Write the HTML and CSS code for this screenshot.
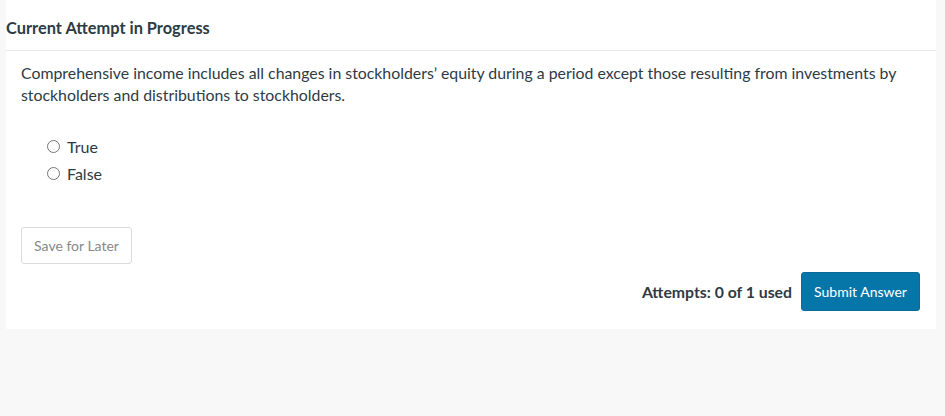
FILE: index.html
```html
<!DOCTYPE html>
<html>
<head>
<meta charset="utf-8">
<link rel="stylesheet" href="styles.css">
</head>
<body>
<div class="panel">
  <div class="header"><h2 class="title">Current Attempt in Progress</h2></div>
  <div class="content">
    <p class="question">Comprehensive income includes all changes in stockholders’ equity during a period except those resulting from investments by stockholders and distributions to stockholders.</p>
    <div class="options">
      <label class="option"><span class="radio"></span><span>True</span></label>
      <label class="option"><span class="radio"></span><span>False</span></label>
    </div>
    <button class="btn-save">Save for Later</button>
    <div class="footer">
      <span class="attempts">Attempts: 0 of 1 used</span>
      <button class="btn-submit">Submit Answer</button>
    </div>
  </div>
</div>
</body>
</html>
```

FILE: styles.css
```css
html, body {
  margin: 0;
  padding: 0;
  background: #f8f8f8;
  font-family: Lato, "Open Sans", sans-serif;
  color: #2d3b45;
}
.panel {
  margin-left: 6px;
  width: 930px;
  background: #fff;
  padding-bottom: 18px;
}
.header {
  padding: 17px 0 11px;
  border-bottom: 1px solid #e8e8e8;
}
.title {
  margin: 0;
  font-size: 16.4px;
  font-weight: 700;
  line-height: 22px;
}
.content {
  padding: 0 16px 0 15px;
}
.question {
  margin: 11px 0 0;
  font-size: 15.85px;
  line-height: 22px;
}
.options {
  display: flex;
  flex-direction: column;
  margin-top: 27px;
  padding-left: 26px;
}
.option {
  display: flex;
  align-items: center;
  gap: 7px;
  height: 27px;
  font-size: 16px;
}
.radio {
  width: 11px;
  height: 11px;
  border: 1px solid #767676;
  border-radius: 50%;
  background: #fff;
}
.btn-save {
  display: block;
  margin-top: 40px;
  width: 111px;
  height: 37px;
  border: 1px solid #dcdcdc;
  border-radius: 3px;
  background: #fff;
  color: #888;
  font-family: Lato, sans-serif;
  font-size: 14px;
  padding: 0;
}
.footer {
  display: flex;
  justify-content: flex-end;
  align-items: center;
  gap: 9px;
  margin-top: 8px;
}
.attempts {
  font-size: 15.8px;
  font-weight: 700;
  color: #2d3b45;
  margin-top: -1px;
}
.btn-submit {
  width: 119px;
  height: 39px;
  background: #0676a9;
  border: 1px solid #0a6a98;
  border-radius: 3px;
  color: #fff;
  font-family: Lato, sans-serif;
  font-size: 14px;
  padding: 0;
}
```
